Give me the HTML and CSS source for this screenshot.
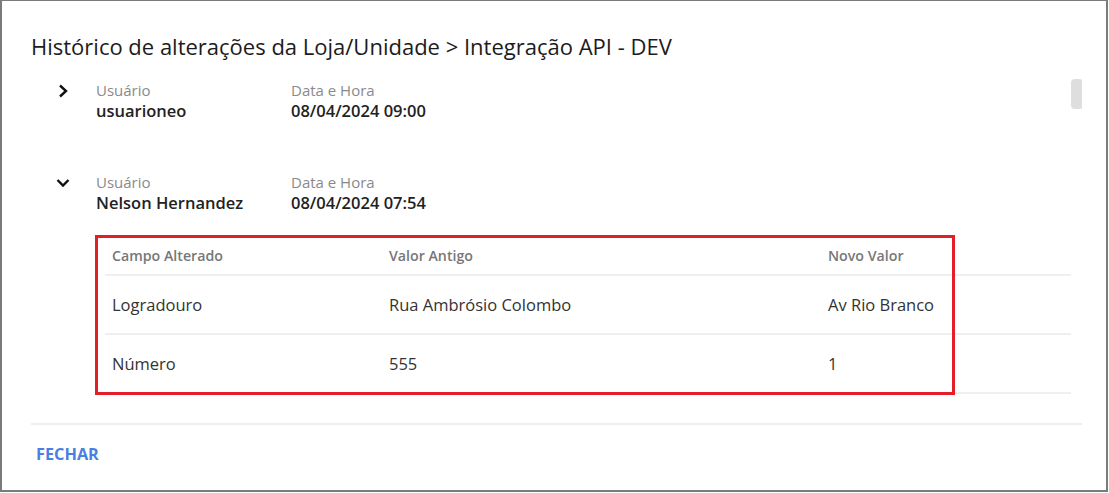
FILE: index.html
```html
<!DOCTYPE html>
<html lang="pt-BR">
<head>
    <meta charset="UTF-8">
    <meta name="viewport" content="width=device-width, initial-scale=1.0">
    <title>Histórico de alterações</title>
    <link rel="stylesheet" href="styles.css">
</head>
<body>
    <div class="dialog">
        <h1 class="dialog-title">Histórico de alterações da Loja/Unidade &gt; Integração API - DEV</h1>

        <div class="history">
            <div class="entry">
                <div class="entry-head">
                    <span class="toggle">
                        <svg width="14" height="14" viewBox="0 0 14 14"><path d="M4 1.5 L10 7 L4 12.5" fill="none" stroke="#111" stroke-width="2.4"/></svg>
                    </span>
                    <div class="field user">
                        <span class="field-label">Usuário</span>
                        <span class="field-value">usuarioneo</span>
                    </div>
                    <div class="field">
                        <span class="field-label">Data e Hora</span>
                        <span class="field-value">08/04/2024 09:00</span>
                    </div>
                </div>
            </div>

            <div class="entry open">
                <div class="entry-head">
                    <span class="toggle">
                        <svg width="14" height="14" viewBox="0 0 14 14"><path d="M1.5 4 L7 9.5 L12.5 4" fill="none" stroke="#111" stroke-width="2.4"/></svg>
                    </span>
                    <div class="field user">
                        <span class="field-label">Usuário</span>
                        <span class="field-value">Nelson Hernandez</span>
                    </div>
                    <div class="field">
                        <span class="field-label">Data e Hora</span>
                        <span class="field-value">08/04/2024 07:54</span>
                    </div>
                </div>

                <div class="changes">
                    <table>
                        <thead>
                            <tr>
                                <th class="col-field">Campo Alterado</th>
                                <th class="col-old">Valor Antigo</th>
                                <th>Novo Valor</th>
                            </tr>
                        </thead>
                        <tbody>
                            <tr>
                                <td>Logradouro</td>
                                <td>Rua Ambrósio Colombo</td>
                                <td>Av Rio Branco</td>
                            </tr>
                            <tr>
                                <td>Número</td>
                                <td>555</td>
                                <td>1</td>
                            </tr>
                        </tbody>
                    </table>
                    <div class="highlight"></div>
                </div>
            </div>

            <div class="scroll-thumb"></div>
        </div>

        <div class="dialog-actions">
            <button type="button" class="btn-close">FECHAR</button>
        </div>
    </div>
</body>
</html>
```

FILE: styles.css
```css
body {
    margin: 0;
    font-family: "Open Sans", Arial, sans-serif;
    background-color: white;
}
.dialog {
    width: 1108px;
    height: 492px;
    box-sizing: border-box;
    border: 2px solid #7b7b7b;
    border-top-width: 1px;
    padding: 30px 24px 0 29px;
    background-color: white;
}
.dialog-title {
    margin: 0;
    font-size: 22px;
    line-height: 30px;
    font-weight: 500;
    color: #1c1c1c;
    height: 40px;
}
.history {
    position: relative;
    height: 352px;
    padding-top: 9px;
    box-sizing: border-box;
    overflow: hidden;
}
.entry {
    height: 92px;
}
.entry.open {
    height: auto;
}
.entry-head {
    display: flex;
    align-items: flex-start;
    padding-left: 25px;
}
.toggle {
    width: 40px;
    display: flex;
    padding-top: 4px;
}
.field {
    display: flex;
    flex-direction: column;
}
.field.user {
    width: 195px;
}
.field-label {
    font-size: 15px;
    line-height: 20px;
    color: #8a8a8a;
}
.field-value {
    font-size: 16.5px;
    line-height: 22px;
    font-weight: 600;
    color: #222;
}
.changes {
    position: relative;
    margin: 22px 0 0 74px;
    width: 966px;
}
table {
    width: 100%;
    border-collapse: collapse;
}
th, td {
    text-align: left;
    padding: 0 7px;
    border-bottom: 2px solid #efefef;
}
th {
    height: 38px;
    font-size: 14.2px;
    font-weight: 600;
    color: #777;
}
td {
    height: 57px;
    font-size: 16.5px;
    color: #333;
}
.col-field {
    width: 263px;
}
.col-old {
    width: 425px;
}
.highlight {
    position: absolute;
    left: -10px;
    top: -1px;
    width: 860px;
    height: 160px;
    box-sizing: border-box;
    border: 3px solid #e31e27;
}
.scroll-thumb {
    position: absolute;
    left: 1040px;
    top: 8px;
    width: 12px;
    height: 30px;
    border-radius: 4px;
    background-color: #dedede;
}
.dialog-actions {
    border-top: 2px solid #eeeeee;
    padding: 18px 0 0 5px;
}
.btn-close {
    background: none;
    border: none;
    padding: 0;
    font-family: "Open Sans", Arial, sans-serif;
    font-size: 16.3px;
    line-height: 20px;
    font-weight: 700;
    color: #4a7fe2;
    cursor: pointer;
}
```
